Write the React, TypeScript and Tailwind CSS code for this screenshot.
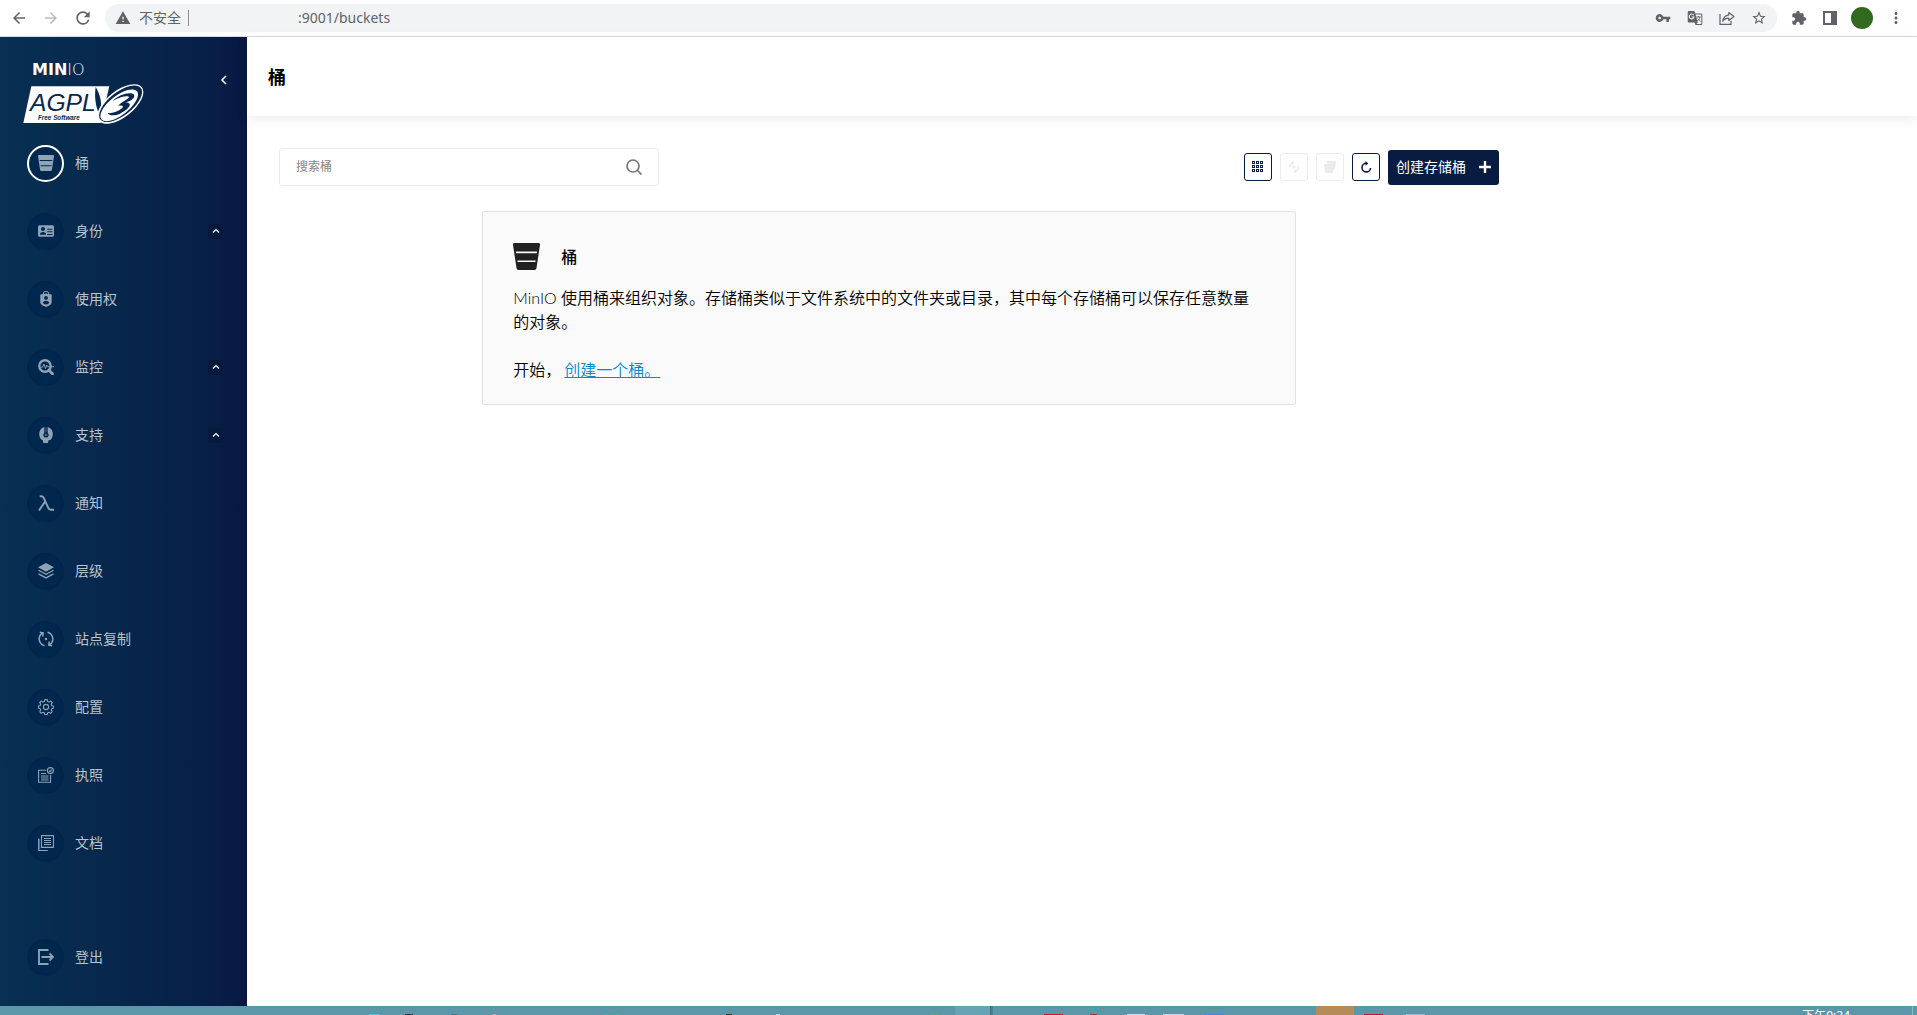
import type { ReactNode } from "react";
import {
  MdArrowBack,
  MdArrowForward,
  MdExtension,
  MdMoreVert,
  MdRefresh,
  MdStarBorder,
  MdVpnKey,
  MdWarning,
} from "react-icons/md";

function Svg({ size = "size-4", children }: { size?: string; children: ReactNode }) {
  return (
    <svg viewBox="0 0 16 16" className={`${size} shrink-0`} fill="currentColor" aria-hidden="true">
      {children}
    </svg>
  );
}

const BucketShape = () => (
  <path
    fillRule="evenodd"
    d="M1 0h14a1 1 0 0 1 1 1.2L13.9 15a1.2 1.2 0 0 1-1.2 1H3.3a1.2 1.2 0 0 1-1.2-1L0 1.2A1 1 0 0 1 1 0Zm.7 5 .1 1h12.4l.1-1H1.700Zm.9 5.300.1 1h10.600l.1-1H2.600Z"
  />
);

const TranslateIcon = () => (
  <svg viewBox="0 0 16 16" className="size-4" aria-hidden="true">
    <path fill="#5f6368" d="M2 1h5.300l.9 2.500H14a1.300 1.300 0 0 1 1.300 1.300v9a1.300 1.300 0 0 1-1.300 1.300H8.500L7.600 12.500H2A1.300 1.300 0 0 1 .7 11.200v-9A1.300 1.300 0 0 1 2 1Z" />
    <path fill="#f1f3f4" d="M8.600 4.500h5.700v9.600H9.500l1.200-1.600Z" />
    <path fill="none" stroke="#f1f3f4" strokeWidth="1.100" d="M6.700 5.200A2.400 2.400 0 1 0 7 7H4.800" />
    <path fill="none" stroke="#5f6368" strokeWidth="0.900" d="M9.300 7h4.400M11.500 6v1M13 7c-.4 2-1.600 3.300-3 4M10.500 8.500l2.800 3" />
  </svg>
);

const ShareIcon = () => (
  <svg viewBox="0 0 16 16" className="size-4" fill="none" stroke="#5f6368" strokeWidth="1.200" aria-hidden="true">
    <path d="M1 4v10.400h11V11" />
    <path d="M9.800 2.500 15 6.500l-5.200 4V8.200C7 8.200 5 9.200 3.800 11.300 4.300 7.500 6.300 5.300 9.800 4.800Z" strokeLinejoin="round" />
  </svg>
);

const AccessIcon = () => (
  <Svg>
    <path d="M5.200 3.500V3a2.800 2.800 0 0 1 5.600 0v.5" fill="none" stroke="currentColor" strokeWidth="1" />
    <path
      fillRule="evenodd"
      d="M2.300 3.500 8 2.600l5.700.9V11c0 1.500-.9 2.700-2.300 3.400L8 16l-3.400-1.600C3.200 13.700 2.300 12.500 2.300 11ZM8 5a1.900 1.900 0 1 0 0 3.800A1.900 1.900 0 0 0 8 5ZM4.900 11.600c.3 1.200 1.500 1.900 3.100 1.900s2.800-.7 3.100-1.900C10.600 10.400 9.500 9.700 8 9.700s-2.600.7-3.100 1.900Z"
    />
  </Svg>
);

const IdentityIcon = () => (
  <Svg>
    <path
      fillRule="evenodd"
      d="M1.500 2.300h13A1.500 1.500 0 0 1 16 3.800v8.400a1.500 1.500 0 0 1-1.500 1.500h-13A1.500 1.500 0 0 1 0 12.200V3.800a1.500 1.500 0 0 1 1.500-1.500ZM5 3.900a2 2 0 1 0 0 4 2 2 0 0 0 0-4ZM1.800 11.700h6.400C8 9.900 6.700 8.900 5 8.900s-3 1-3.200 2.800ZM9.200 5.700v1h5.300v-1Zm0 2.600v1h5.300v-1Zm0 2.600v1h5.300v-1Z"
    />
  </Svg>
);

const MonitorIcon = () => (
  <Svg>
    <circle cx="7" cy="7" r="5.700" fill="none" stroke="currentColor" strokeWidth="2.400" />
    <path d="m11 11.300 3.500 3.500" stroke="currentColor" strokeWidth="2.800" strokeLinecap="round" />
    <path d="M3 8.200h1.500L5.900 5l1.500 4.500 1.400-3.300.9 1.500H16" fill="none" stroke="currentColor" strokeWidth="1" />
  </Svg>
);

const SupportIcon = () => (
  <Svg>
    <path
      fillRule="evenodd"
      d="M6.300 0v6A2.500 2.500 0 0 0 8 10.500 2.500 2.500 0 0 0 9.700 6V0c3 .8 5.300 3.500 5.100 7.200-.1 2.500-1 4.300-2.300 5.700l-2 .3L10 16H5.300l-.5-2.700C2.600 12.500 1.200 10 1.200 7.200 1.200 3.700 3.300.8 6.300 0Z"
    />
    <path d="M8 6.700a1.300 1.300 0 1 1-.1 2.600A1.300 1.300 0 0 1 8 6.700ZM7.500 0h1v5h-1Z" opacity=".5" />
  </Svg>
);

const LambdaIcon = () => (
  <Svg>
    <path
      d="M1.700 1.200h1.700c1.200 0 1.800.6 2.300 1.700l4.600 10c.5 1.200 1.100 1.800 2.400 1.800H16M7.300 6.200 1 15.500"
      fill="none"
      stroke="currentColor"
      strokeWidth="1.900"
    />
  </Svg>
);

const TiersIcon = () => (
  <Svg>
    <path d="M8 0l8 4.300-8 4.400-8-4.400Z" />
    <path d="m.5 7.200 7.500 4 7.500-4M.5 10.900l7.500 4 7.500-4" fill="none" stroke="currentColor" strokeWidth="1.300" />
  </Svg>
);

const ReplicationIcon = () => (
  <Svg>
    <g fill="none" stroke="currentColor" strokeWidth="1.500">
      <path d="M6.500 14.800A7 7 0 0 1 4.300 2.200M1.800 1.300l3.400.6-.5 3.600" />
      <path d="M9.500 1.200a7 7 0 0 1 2.200 12.600M14.200 14.700l-3.400-.6.5-3.600" />
    </g>
    <circle cx="8" cy="8" r="1.200" />
  </Svg>
);

const GearIcon = () => (
  <Svg>
    <g fill="none" stroke="currentColor" strokeWidth="1.100" strokeLinejoin="round">
      <path d="M6.800.6h2.400l.5 2 1.300.5 1.700-1.100 1.600 1.600L13.200 5.300l.5 1.300 1.700.4v2.200l-1.700.5-.5 1.300 1 1.700-1.600 1.600-1.700-1-1.200.5-.5 1.700H6.800l-.5-1.700-1.300-.5-1.700 1-1.600-1.600 1-1.700-.5-1.300-1.700-.5V6.900l1.700-.4.5-1.300-1-1.700L3.300 2 5 3.100l1.300-.5Z" />
      <circle cx="8" cy="8" r="2.600" />
    </g>
  </Svg>
);

const LicenseIcon = () => (
  <Svg>
    <g fill="none" stroke="currentColor" strokeWidth="1.100">
      <path d="M8.300 3.300H.6v12h12V8" />
      <circle cx="12.400" cy="3.600" r="3" />
      <path d="m11 3.600 1 1 1.800-2M3 6.500h5M3 9h7.500M3 11h7.500M3 13h7.500" />
    </g>
  </Svg>
);

const DocsIcon = () => (
  <Svg>
    <g fill="none" stroke="currentColor" strokeWidth="1.100">
      <path d="M3.500.6h12v11.800h-12ZM.6 3.500v12h9.200" />
      <path d="M1.600 4v10.500" opacity=".5" />
      <path d="M6 3.500h7M6 5.500h7M6 7.500h7M6 9.500h7" />
    </g>
  </Svg>
);

const LogoutIcon = () => (
  <Svg>
    <path d="M10.500 1H1v14h9.500M3.500 8H15M11.500 4.500 15 8l-3.500 3.500" fill="none" stroke="currentColor" strokeWidth="1.900" />
  </Svg>
);

type NavEntry = { label: string; icon: ReactNode; active?: boolean; group?: boolean };

const navEntries: NavEntry[] = [
  { label: "桶", icon: <Svg><BucketShape /></Svg>, active: true },
  { label: "身份", icon: <IdentityIcon />, group: true },
  { label: "使用权", icon: <AccessIcon /> },
  { label: "监控", icon: <MonitorIcon />, group: true },
  { label: "支持", icon: <SupportIcon />, group: true },
  { label: "通知", icon: <LambdaIcon /> },
  { label: "层级", icon: <TiersIcon /> },
  { label: "站点复制", icon: <ReplicationIcon /> },
  { label: "配置", icon: <GearIcon /> },
  { label: "执照", icon: <LicenseIcon /> },
  { label: "文档", icon: <DocsIcon /> },
];

function NavItem({ label, icon, active, group }: NavEntry) {
  return (
    <li>
      <a href="#" className="flex h-[68px] items-center pr-6 pl-[27px] text-sm text-[#b9c3cf]">
        <span
          className={
            active
              ? "flex size-[37px] items-center justify-center rounded-full border-2 border-white bg-[#00274d] text-[#8fa2b6]"
              : "flex size-[37px] items-center justify-center rounded-full border-2 border-[#04244a] bg-[#00274d] text-[#8fa2b6]"
          }
        >
          {icon}
        </span>
        <span className="ml-[11px]">{label}</span>
        {group && (
          <span className="ml-auto flex size-[15px] items-center justify-center rounded-xs bg-[#081a3c] text-white">
            <svg viewBox="0 0 8 8" className="size-2" fill="none" stroke="currentColor" strokeWidth="1.100">
              <path d="M1 5.500 4 2.500l3 3" />
            </svg>
          </span>
        )}
      </a>
    </li>
  );
}

function Logo() {
  return (
    <div>
      <div className="mb-[5px] ml-[10px] flex h-4 items-center text-base leading-none text-white [font-family:'DejaVu_Sans',sans-serif]">
        <span className="font-bold">MIN</span>
        <span className="font-extralight">IO</span>
      </div>
      <svg viewBox="0 0 366 126" className="h-[42px] w-[122px]" role="img" aria-label="AGPL v3 Free Software">
        <path d="M28 10H262L236 120H4Z" fill="#fff" />
        <path d="M221 12C217 40 220 68 231 92L236 78C240 56 233 32 221 12Z" fill="#07274c" />
        <text x="24" y="84" fontSize="74" fontStyle="italic" fontFamily="'Liberation Sans Narrow','Liberation Sans',sans-serif" fill="#07274c">
          AGPL
        </text>
        <text x="48" y="110" fontSize="19" fontWeight="bold" fontStyle="italic" fontFamily="'Liberation Sans',sans-serif" fill="#07274c">
          Free Software
        </text>
        <g transform="rotate(-38 295 63)">
          <ellipse cx="295" cy="63" rx="82" ry="40" fill="#fff" />
          <ellipse cx="296" cy="63" rx="77" ry="35" fill="#07274c" />
          <ellipse cx="290" cy="64" rx="68" ry="29" fill="#fff" />
        </g>
        <path
          d="M272 54C288 38 314 28 332 32C344 38 334 52 312 58C332 60 326 76 294 92C276 100 262 98 256 90C270 92 288 86 300 76C306 70 302 66 288 68C298 58 314 52 322 42C316 36 292 42 272 54Z"
          fill="#07274c"
        />
      </svg>
    </div>
  );
}

function BrowserBar() {
  return (
    <header className="flex h-[37px] shrink-0 items-center border-b border-[#d9dbdd] bg-white pr-3 pl-[9px] text-[#5f6368]">
      <div className="flex gap-3">
        <button aria-label="后退" className="p-px"><MdArrowBack className="size-[18px]" /></button>
        <button aria-label="前进" className="p-px text-[#babcbe]"><MdArrowForward className="size-[18px]" /></button>
        <button aria-label="重新加载"><MdRefresh className="size-5" /></button>
      </div>
      <div className="ml-3 flex h-7 flex-1 items-center rounded-full bg-[#f1f3f4] pr-[10px] pl-[10px]">
        <MdWarning className="size-4" />
        <span className="ml-2 border-r border-[#8b8e91] pr-[7px] text-sm leading-4">不安全</span>
        <input
          aria-label="地址"
          defaultValue=":9001/buckets"
          className="min-w-0 flex-1 bg-transparent pl-[109px] text-sm outline-none [font-family:'Noto_Sans','Noto_Sans_CJK_SC',sans-serif]"
        />
        <div className="flex gap-4">
          <button aria-label="密码"><MdVpnKey className="size-4" /></button>
          <button aria-label="翻译"><TranslateIcon /></button>
          <button aria-label="分享"><ShareIcon /></button>
          <button aria-label="收藏"><MdStarBorder className="size-4" /></button>
        </div>
      </div>
      <div className="ml-[14px] flex items-center gap-[14px]">
        <button aria-label="扩展程序"><MdExtension className="size-4" /></button>
        <button aria-label="侧边栏" className="ml-[2px] flex size-[14px] justify-end border-2 border-[#5f6368]">
          <span className="h-full w-1 bg-[#5f6368]" />
        </button>
        <button aria-label="个人资料" className="size-[22px] rounded-full bg-[#33691e]" />
        <button aria-label="菜单"><MdMoreVert className="size-[18px]" /></button>
      </div>
    </header>
  );
}

function Sidebar() {
  return (
    <aside className="flex w-[247px] shrink-0 flex-col bg-linear-to-r from-[#073052] via-[#071f46] via-85% to-[#081842] pb-[15px]">
      <div className="flex h-[92px] shrink-0 items-start justify-between pt-[25px] pr-[18px] pl-[22px]">
        <Logo />
        <button aria-label="收起菜单" className="mt-3 text-white">
          <svg viewBox="0 0 10 12" className="h-3 w-[10px]" fill="none" stroke="currentColor" strokeWidth="1.600">
            <path d="M7 2 3 6l4 4" />
          </svg>
        </button>
      </div>
      <nav className="flex flex-1 flex-col">
        <ul>
          {navEntries.map((entry) => (
            <NavItem key={entry.label} {...entry} />
          ))}
        </ul>
        <ul className="mt-auto">
          <NavItem label="登出" icon={<LogoutIcon />} />
        </ul>
      </nav>
    </aside>
  );
}

function ToolButton({ label, disabled, children }: { label: string; disabled?: boolean; children: ReactNode }) {
  return (
    <button
      aria-label={label}
      disabled={disabled}
      className="flex size-7 items-center justify-center rounded-[3px] border border-[#081c42] text-[#081c42] disabled:border-[#ececec] disabled:text-[#e9e9e9]"
    >
      {children}
    </button>
  );
}

function Toolbar() {
  return (
    <div className="flex items-center justify-between">
      <div className="flex h-[38px] w-[380px] items-center rounded-[3px] border border-[#eaeaea] px-4">
        <input
          type="text"
          aria-label="搜索桶"
          placeholder="搜索桶"
          className="min-w-0 flex-1 bg-transparent text-xs outline-none placeholder:text-[#858585]"
        />
        <svg viewBox="0 0 16 16" className="size-4" fill="none" stroke="#777" strokeWidth="1.700" aria-hidden="true">
          <circle cx="7" cy="7" r="6" />
          <path d="m11.500 11.500 4 4" />
        </svg>
      </div>
      <div className="flex items-center gap-2">
        <ToolButton label="选择多个存储桶">
          <svg viewBox="0 0 12 12" className="size-3" fill="none" stroke="currentColor" strokeWidth="1">
            {[0.5, 4.5, 8.5].map((y) =>
              [0.5, 4.5, 8.5].map((x) => <rect key={`${x}-${y}`} x={x} y={y} width="2" height="2" />)
            )}
          </svg>
        </ToolButton>
        <ToolButton label="设置生命周期" disabled>
          <svg viewBox="0 0 12 12" className="size-3" fill="none" stroke="currentColor" strokeWidth="1.400">
            <path d="M2 6.500C1.500 4 2.800 2 5 1.600M3.800.3 5.300 1.600 4 3.200M10 5.500c.5 2.500-.8 4.500-3 4.900M8.200 11.700 6.700 10.400 8 8.800" />
            <circle cx="6" cy="6" r="1.500" fill="currentColor" stroke="none" />
          </svg>
        </ToolButton>
        <ToolButton label="设置复制" disabled>
          <svg viewBox="0 0 12 12" className="size-3" fill="currentColor">
            <path d="M3 0h9l-1.200 8.500H9.500L10 2.500H2.800Z" />
            <path d="M0 3h10.200L8.800 12H1.500Z" />
            <path d="M.8 5.800h8.500M1.200 8.800h7.600" stroke="#fff" strokeWidth=".4" />
          </svg>
        </ToolButton>
        <ToolButton label="刷新">
          <svg viewBox="0 0 12 12" className="size-3" fill="none" stroke="currentColor" strokeWidth="1.600">
            <path d="M6.500 2.300A4.300 4.300 0 1 0 10.600 7" />
            <path d="M5.500 0 8.300 2.400 5.500 4.800Z" fill="currentColor" stroke="none" />
          </svg>
        </ToolButton>
        <button className="flex h-[35px] items-center gap-[13px] rounded-[3px] bg-[#081c42] px-2 text-sm text-white">
          创建存储桶
          <svg viewBox="0 0 12 12" className="size-3" stroke="currentColor" strokeWidth="2.400" aria-hidden="true">
            <path d="M6 0v12M0 6h12" />
          </svg>
        </button>
      </div>
    </div>
  );
}

function EmptyBuckets() {
  return (
    <section className="mx-auto mt-[25px] w-2/3 rounded-xs border border-[#e2e2e2] bg-[#fafafa] px-[30px] pt-[31px] pb-[22px] text-base leading-6 text-black">
      <div className="flex items-center gap-[21px]">
        <span className="text-[#212121]"><Svg size="size-[27px]"><BucketShape /></Svg></span>
        <h2 className="font-medium">桶</h2>
      </div>
      <p className="mt-4 font-[350]">
        MinIO 使用桶来组织对象。存储桶类似于文件系统中的文件夹或目录，其中每个存储桶可以保存任意数量的对象。
      </p>
      <p className="mt-6 font-[350]">
        开始，
        <a href="#" className="ml-[3px] text-[#0288d1] underline">创建一个桶。</a>
      </p>
    </section>
  );
}

/* Tips of the pinned icons that rise above the lower edge of the desktop bar. */
const taskIcons = [
  "ml-[369px] w-[10px] bg-[#42c8dc]",
  "ml-[26px] w-[8px] bg-[#33373c]",
  "ml-[38px] w-[7px] bg-[#4a7c88]",
  "ml-[35px] w-[3px] bg-[#d0a090]",
  "ml-[107px] w-[16px] bg-[#4aa79a]",
  "ml-[107px] w-[6px] bg-[#3a3a28]",
  "ml-[44px] w-[4px] bg-[#b5d8e4]",
  "ml-[151px] w-[8px] bg-[#62a878]",
];

const windowIcons = [
  "ml-[51px] w-[19px] bg-[#e01020]",
  "ml-[27px] w-[7px] bg-[#b03020]",
  "ml-[30px] w-[18px] bg-[#cfdfec]",
  "ml-[18px] w-[21px] bg-[#c3d3e4]",
  "ml-[20px] w-[20px] bg-[#3f8af0]",
];

function DesktopBar() {
  return (
    <footer className="flex h-[9px] shrink-0 overflow-hidden bg-[#5b97a8]">
      <div className="flex w-[955px] items-end">
        {taskIcons.map((c) => (
          <span key={c} className={`h-px shrink-0 ${c}`} />
        ))}
      </div>
      <div className="w-[35px] bg-[#68a3b5]" />
      <div className="w-[3px] border-l border-[#3f6975] bg-[#4d8190]" />
      <div className="flex w-[323px] items-end">
        {windowIcons.map((c) => (
          <span key={c} className={`h-px shrink-0 ${c}`} />
        ))}
      </div>
      <div className="w-[38px] bg-[#b58b58]" />
      <div className="flex items-end">
        <span className="ml-[10px] h-px w-[19px] bg-[#c81030]" />
        <span className="ml-[23px] h-px w-[19px] bg-[#9ab8d4]" />
      </div>
      <time className="mt-1 mr-[62px] ml-auto text-xs leading-3 whitespace-nowrap text-white [font-family:'Noto_Sans','Noto_Sans_CJK_SC',sans-serif]">
        下午9:24
      </time>
      <span className="mr-1 w-px bg-[#8fb9c5]" />
    </footer>
  );
}

export default function App() {
  return (
    <div className="flex h-screen flex-col bg-white [font-family:Lato,'Noto_Sans_CJK_SC',sans-serif]">
      <BrowserBar />
      <div className="flex min-h-0 flex-1">
        <Sidebar />
        <main className="min-w-0 flex-1">
          <div className="flex h-[79px] items-center px-[21px] shadow-[0_3px_12px_rgba(0,0,0,0.08)]">
            <h1 className="text-lg font-bold text-black">桶</h1>
          </div>
          <div className="max-w-[1284px] p-8">
            <Toolbar />
            <EmptyBuckets />
          </div>
        </main>
      </div>
      <DesktopBar />
    </div>
  );
}
